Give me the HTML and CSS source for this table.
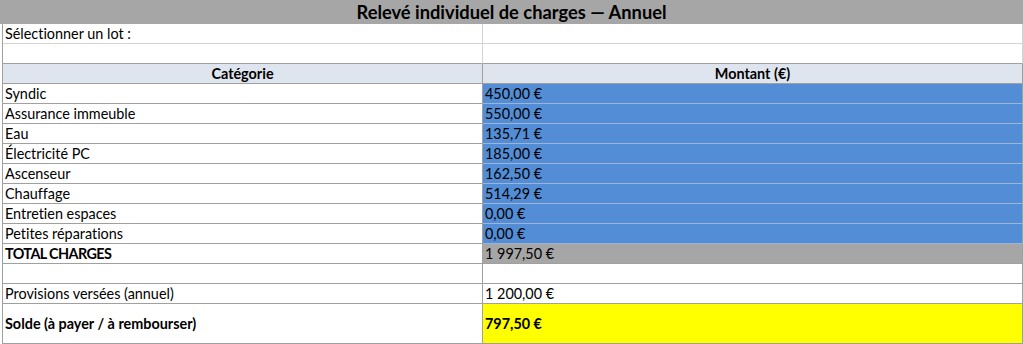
FILE: index.html
```html
<!DOCTYPE html>
<html lang="fr">
<head>
<meta charset="utf-8">
<title>Relevé individuel de charges — Annuel</title>
<link rel="stylesheet" href="styles.css">
</head>
<body>
<div class="title">Relevé individuel de charges — Annuel</div>
<div class="sheet">
  <div class="row light"><div class="cell">Sélectionner un lot :</div><div class="cell"></div></div>
  <div class="row light-col"><div class="cell"></div><div class="cell"></div></div>
  <div class="row head"><div class="cell">Catégorie</div><div class="cell">Montant (€)</div></div>
  <div class="row"><div class="cell">Syndic</div><div class="cell blue">450,00 €</div></div>
  <div class="row"><div class="cell">Assurance immeuble</div><div class="cell blue">550,00 €</div></div>
  <div class="row"><div class="cell">Eau</div><div class="cell blue">135,71 €</div></div>
  <div class="row"><div class="cell">Électricité PC</div><div class="cell blue">185,00 €</div></div>
  <div class="row"><div class="cell">Ascenseur</div><div class="cell blue">162,50 €</div></div>
  <div class="row"><div class="cell">Chauffage</div><div class="cell blue">514,29 €</div></div>
  <div class="row"><div class="cell">Entretien espaces</div><div class="cell blue">0,00 €</div></div>
  <div class="row"><div class="cell">Petites réparations</div><div class="cell blue">0,00 €</div></div>
  <div class="row"><div class="cell bold caps">TOTAL CHARGES</div><div class="cell grey">1 997,50 €</div></div>
  <div class="row"><div class="cell"></div><div class="cell"></div></div>
  <div class="row"><div class="cell">Provisions versées (annuel)</div><div class="cell">1 200,00 €</div></div>
  <div class="row tall"><div class="cell bold">Solde (à payer / à rembourser)</div><div class="cell bold yellow">797,50 €</div></div>
</div>
</body>
</html>
```

FILE: styles.css
```css
html, body {
  margin: 0;
  padding: 0;
  background: #ffffff;
}
body {
  font-family: Lato, "Liberation Sans", sans-serif;
  font-size: 14.4px;
  font-variant-ligatures: none;
  color: #000;
  width: 1023px;
}
.title {
  height: 24px;
  background: #a6a6a6;
  font-weight: bold;
  font-size: 18.3px;
  line-height: 24px;
  text-align: center;
  color: #000;
}
.sheet {
  margin-left: 2px;
  border-left: 1px solid #a0a0a0;
}
.row {
  display: grid;
  grid-template-columns: 480px 540px;
  height: 20px;
}
.cell {
  box-sizing: border-box;
  border-right: 1px solid #a0a0a0;
  border-bottom: 1px solid #a0a0a0;
  padding: 0 2px;
  display: flex;
  align-items: flex-end;
  line-height: 18px;
  white-space: nowrap;
  overflow: hidden;
}
.row.light .cell {
  border-bottom-color: #d4d4d4;
  border-right-color: #d4d4d4;
}
.row.light-col .cell {
  border-right-color: #d4d4d4;
}
.row.head .cell {
  background: #dfe5ee;
  font-weight: bold;
  justify-content: center;
}
.blue {
  background: #538dd5;
  border-bottom-color: #9db4d6 !important;
}
.grey {
  background: #a6a6a6;
}
.yellow {
  background: #ffff00;
}
.bold {
  font-weight: bold;
}
.caps {
  letter-spacing: -0.6px;
}
.row.tall {
  height: 40px;
}
.row.tall .cell {
  align-items: center;
}
```
